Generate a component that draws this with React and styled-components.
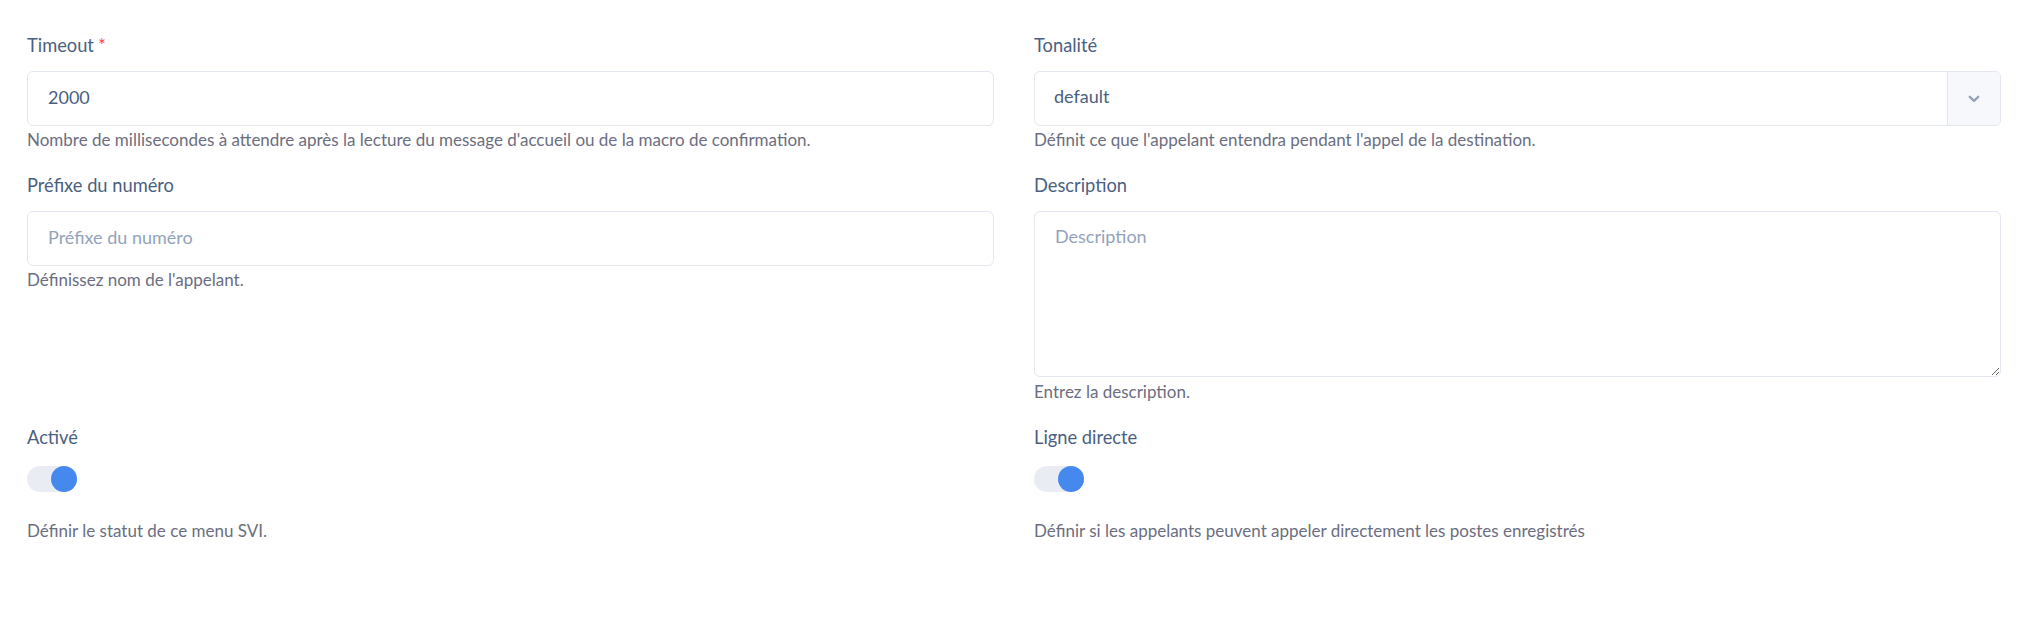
import React from "react";
import styled, { createGlobalStyle } from "styled-components";

const GlobalStyle = createGlobalStyle`
  body {
    margin: 0;
    background: #ffffff;
    font-family: Lato, "Liberation Sans", sans-serif;
  }
`;

const Page = styled.div`
  padding: 33px 21px 0 27px;
  height: 622px;
  box-sizing: border-box;
`;

const FormGrid = styled.div`
  display: grid;
  grid-template-columns: 1fr 1fr;
  column-gap: 40px;
  row-gap: 23px;
  align-items: start;
`;

const Field = styled.div`
  display: flex;
  flex-direction: column;
`;

const Label = styled.label`
  font-size: 18.3px;
  line-height: 24px;
  color: #4a5f81;
  margin-bottom: ${(p) => (p.$toggle ? "17px" : "14px")};
`;

const Required = styled.span`
  color: #ef4444;
  margin-left: 4px;
`;

const Input = styled.input`
  box-sizing: border-box;
  height: 55px;
  width: 100%;
  padding: 0 20px 4px;
  border: 1px solid #e2e6ee;
  border-radius: 6px;
  font-family: inherit;
  font-size: 18px;
  color: #4a5f81;
  outline: none;

  &::placeholder {
    color: #93a3bb;
  }
`;

const TextArea = styled.textarea`
  display: block;
  box-sizing: border-box;
  height: 166px;
  width: 100%;
  padding: 12px 20px;
  border: 1px solid #e2e6ee;
  border-radius: 6px;
  font-family: inherit;
  font-size: 18px;
  line-height: 24px;
  color: #4a5f81;
  outline: none;
  resize: vertical;

  &::placeholder {
    color: #93a3bb;
  }
`;

const SelectBox = styled.div`
  display: flex;
  height: 55px;
  box-sizing: border-box;
  border: 1px solid #e2e6ee;
  border-radius: 6px;
  overflow: hidden;
`;

const SelectValue = styled.div`
  flex: 1;
  display: flex;
  align-items: center;
  padding: 0 19px 6px;
  font-size: 18px;
  color: #4a5f81;
`;

const SelectAddon = styled.div`
  width: 52px;
  display: flex;
  align-items: center;
  justify-content: center;
  background: #f6f8fb;
  border-left: 1px solid #e2e6ee;
  color: #94a3b8;
`;

const Helper = styled.div`
  font-size: 17px;
  line-height: 20px;
  color: #6b6e80;
  margin-top: ${(p) => p.$gap || "4px"};
`;

const Toggle = styled.div`
  width: 50px;
  height: 26px;
  border-radius: 13px;
  background: #e9edf3;
  display: flex;
  justify-content: ${(p) => (p.$on ? "flex-end" : "flex-start")};
`;

const Knob = styled.div`
  width: 26px;
  height: 26px;
  border-radius: 50%;
  background: #4589ee;
`;

const Chevron = () => (
  <svg width="12" height="8" viewBox="0 0 12 8" fill="none">
    <path
      d="M1.8 1.8L6 5.8L10.2 1.8"
      stroke="currentColor"
      strokeWidth="2.4"
      strokeLinecap="round"
      strokeLinejoin="round"
    />
  </svg>
);

export default function App() {
  return (
    <>
      <GlobalStyle />
      <Page>
        <FormGrid>
          <Field>
            <Label>
              Timeout<Required>*</Required>
            </Label>
            <Input defaultValue="2000" />
            <Helper>
              Nombre de millisecondes à attendre après la lecture du message
              d'accueil ou de la macro de confirmation.
            </Helper>
          </Field>
          <Field>
            <Label>Tonalité</Label>
            <SelectBox>
              <SelectValue>default</SelectValue>
              <SelectAddon>
                <Chevron />
              </SelectAddon>
            </SelectBox>
            <Helper>
              Définit ce que l'appelant entendra pendant l'appel de la
              destination.
            </Helper>
          </Field>
          <Field>
            <Label>Préfixe du numéro</Label>
            <Input placeholder="Préfixe du numéro" />
            <Helper>Définissez nom de l'appelant.</Helper>
          </Field>
          <Field>
            <Label>Description</Label>
            <TextArea placeholder="Description" />
            <Helper $gap="5px">Entrez la description.</Helper>
          </Field>
          <Field>
            <Label $toggle>Activé</Label>
            <Toggle $on>
              <Knob />
            </Toggle>
            <Helper $gap="29px">Définir le statut de ce menu SVI.</Helper>
          </Field>
          <Field>
            <Label $toggle>Ligne directe</Label>
            <Toggle $on>
              <Knob />
            </Toggle>
            <Helper $gap="29px">
              Définir si les appelants peuvent appeler directement les postes
              enregistrés
            </Helper>
          </Field>
        </FormGrid>
      </Page>
    </>
  );
}
